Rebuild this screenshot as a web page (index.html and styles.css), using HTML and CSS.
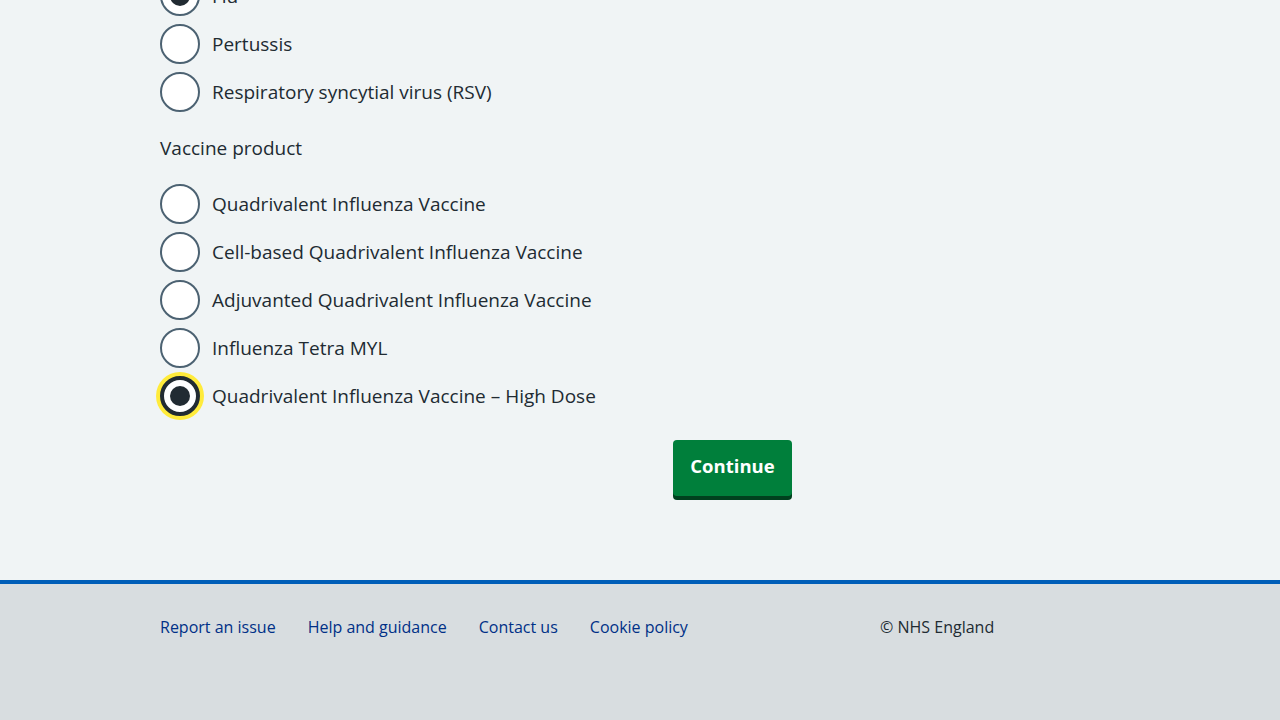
FILE: index.html
```html
<!DOCTYPE html>
<html lang="en">
<head>
<meta charset="utf-8">
<title>Vaccine product</title>
<link rel="stylesheet" href="styles.css">
</head>
<body>
<main class="page">
  <form class="form">
    <div class="radios radios-first">
      <label class="radio"><span class="radio-input is-checked"></span><span class="radio-label">Flu</span></label>
      <label class="radio"><span class="radio-input"></span><span class="radio-label">Pertussis</span></label>
      <label class="radio"><span class="radio-input"></span><span class="radio-label">Respiratory syncytial virus (RSV)</span></label>
    </div>
    <fieldset class="fieldset">
      <legend class="legend">Vaccine product</legend>
      <div class="radios">
        <label class="radio"><span class="radio-input"></span><span class="radio-label">Quadrivalent Influenza Vaccine</span></label>
        <label class="radio"><span class="radio-input"></span><span class="radio-label">Cell-based Quadrivalent Influenza Vaccine</span></label>
        <label class="radio"><span class="radio-input"></span><span class="radio-label">Adjuvanted Quadrivalent Influenza Vaccine</span></label>
        <label class="radio"><span class="radio-input"></span><span class="radio-label">Influenza Tetra MYL</span></label>
        <label class="radio"><span class="radio-input is-checked is-focused"></span><span class="radio-label">Quadrivalent Influenza Vaccine – High Dose</span></label>
      </div>
    </fieldset>
    <div class="actions">
      <button type="button" class="button">Continue</button>
    </div>
  </form>
</main>
<footer class="footer">
  <div class="footer-inner">
    <ul class="footer-links">
      <li><a href="#">Report an issue</a></li>
      <li><a href="#">Help and guidance</a></li>
      <li><a href="#">Contact us</a></li>
      <li><a href="#">Cookie policy</a></li>
    </ul>
    <p class="copyright">© NHS England</p>
  </div>
</footer>
</body>
</html>
```

FILE: styles.css
```css
* { box-sizing: border-box; }
html, body {
  margin: 0;
  padding: 0;
  background: #f0f4f5;
  color: #212b32;
  font-family: "Open Sans", "Liberation Sans", sans-serif;
}
body {
  min-height: 720px;
  display: flex;
  flex-direction: column;
  overflow: hidden;
}
.page {
  width: 960px;
  margin: 0 auto;
  padding-bottom: 80px;
}
.form {
  width: 632px;
  display: flex;
  flex-direction: column;
}
.radios {
  display: flex;
  flex-direction: column;
  gap: 8px;
}
.radios-first {
  margin-top: -24px;
}
.radio {
  display: flex;
  align-items: center;
  gap: 12px;
  height: 40px;
  font-size: 19px;
  line-height: 28px;
}
.radio-input {
  position: relative;
  flex: none;
  width: 40px;
  height: 40px;
  border: 2px solid #4c6272;
  border-radius: 50%;
  background: #fff;
}
.radio-input.is-checked::after {
  content: "";
  position: absolute;
  left: 50%;
  top: 50%;
  width: 20px;
  height: 20px;
  margin: -10px 0 0 -10px;
  border-radius: 50%;
  background: #212b32;
}
.radio-input.is-focused {
  border: 4px solid #212b32;
  box-shadow: 0 0 0 4px #ffeb3b;
}
.fieldset {
  border: 0;
  margin: 22px 0 0;
  padding: 0;
}
.legend {
  padding: 0;
  font-size: 19px;
  line-height: 28px;
  margin-bottom: 22px;
}
.actions {
  display: flex;
  justify-content: flex-end;
  margin-top: 24px;
}
.button {
  font-family: inherit;
  font-size: 18.5px;
  font-weight: 700;
  line-height: 24px;
  color: #fff;
  background: #007f3b;
  border: 0;
  border-radius: 4px;
  padding: 0 0 4px;
  box-shadow: 0 4px 0 #00401e;
  margin-bottom: 4px;
  width: 119px;
  height: 56px;
}
.footer {
  flex: 1;
  background: #d8dde0;
  border-top: 4px solid #005eb8;
}
.footer-inner {
  width: 960px;
  margin: 0 auto;
  padding-top: 32px;
  display: flex;
  align-items: flex-start;
}
.footer-links {
  list-style: none;
  margin: 0;
  padding: 0;
  width: 720px;
  display: flex;
  gap: 32px;
  font-size: 16px;
  line-height: 22px;
}
.footer-links a {
  color: #003087;
  text-decoration: none;
}
.copyright {
  margin: 0;
  font-size: 16px;
  line-height: 22px;
  color: #212b32;
}
```
